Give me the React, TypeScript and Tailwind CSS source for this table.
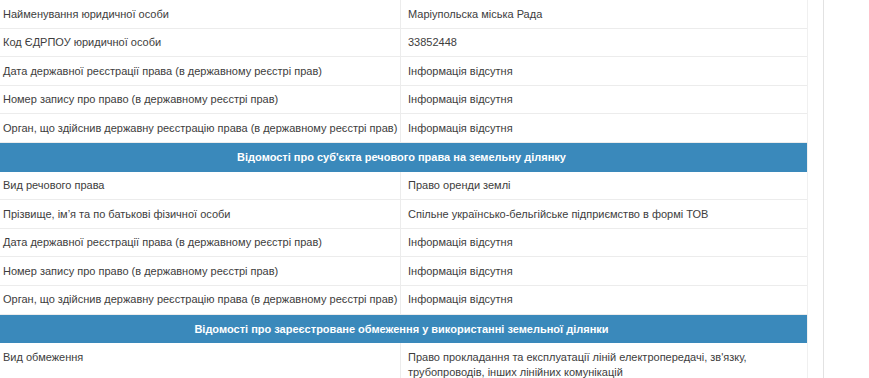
import React from "react";

type Row = { label: string; value: React.ReactNode };

const ownerRows: Row[] = [
  { label: "Найменування юридичної особи", value: "Маріупольска міська Рада" },
  { label: "Код ЄДРПОУ юридичної особи", value: "33852448" },
  { label: "Дата державної реєстрації права (в державному реєстрі прав)", value: "Інформація відсутня" },
  { label: "Номер запису про право (в державному реєстрі прав)", value: "Інформація відсутня" },
  { label: "Орган, що здійснив державну реєстрацію права (в державному реєстрі прав)", value: "Інформація відсутня" },
];

const subjectRows: Row[] = [
  { label: "Вид речового права", value: "Право оренди землі" },
  { label: "Прізвище, ім’я та по батькові фізичної особи", value: "Спільне українсько-бельгійське підприємство в формі ТОВ" },
  { label: "Дата державної реєстрації права (в державному реєстрі прав)", value: "Інформація відсутня" },
  { label: "Номер запису про право (в державному реєстрі прав)", value: "Інформація відсутня" },
  { label: "Орган, що здійснив державну реєстрацію права (в державному реєстрі прав)", value: "Інформація відсутня" },
];

function DataRow({ row, tall }: { row: Row; tall?: boolean }) {
  return (
    <div
      className={
        "grid grid-cols-[401px_1fr] border-b border-[#ececec] " +
        (tall ? "min-h-[40px]" : "h-[28.6px]")
      }
    >
      <div
        className={
          "border-r border-[#ececec] pl-[3px] whitespace-nowrap " +
          (tall ? "pt-[7px] leading-[15px]" : "flex items-center")
        }
      >
        {row.label}
      </div>
      <div className={"pl-[7px] " + (tall ? "pt-[7px] leading-[15px]" : "flex items-center")}>
        {row.value}
      </div>
    </div>
  );
}

function SectionHeader({ title }: { title: string }) {
  return (
    <div className="h-[28.6px] bg-[#3a89bb] text-white font-bold flex items-center justify-center pr-[4px]">
      {title}
    </div>
  );
}

export default function App() {
  return (
    <div
      className="w-[869px] h-[378px] overflow-hidden bg-white flex text-[11px] text-[#3d3d3d]"
      style={{ fontFamily: '"Liberation Sans", Arial, sans-serif' }}
    >
      <div className="w-[808px] border-r border-[#f0f0f0]">
        {ownerRows.map((r, i) => (
          <DataRow key={"o" + i} row={r} />
        ))}
        <SectionHeader title="Відомості про суб'єкта речового права на земельну ділянку" />
        {subjectRows.map((r, i) => (
          <DataRow key={"s" + i} row={r} />
        ))}
        <SectionHeader title="Відомості про зареєстроване обмеження у використанні земельної ділянки" />
        <DataRow
          tall
          row={{
            label: "Вид обмеження",
            value: (
              <>
                Право прокладання та експлуатації ліній електропередачі, зв'язку,
                <br />
                трубопроводів, інших лінійних комунікацій
              </>
            ),
          }}
        />
      </div>
      <div className="ml-[15px] w-px bg-[#e2e2e2]" />
    </div>
  );
}
